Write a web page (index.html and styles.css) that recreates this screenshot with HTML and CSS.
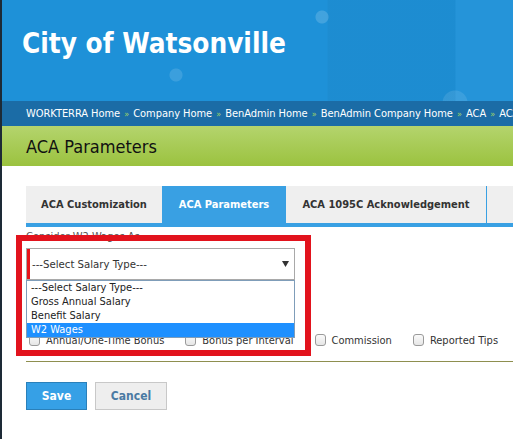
FILE: index.html
```html
<!DOCTYPE html>
<html lang="en">
<head>
<meta charset="utf-8">
<title>ACA Parameters</title>
<link rel="stylesheet" href="styles.css">
</head>
<body>
<div class="page">
  <header class="banner">
    <h1 class="brand">City of Watsonville</h1>
  </header>
  <nav class="crumbs">
    <span>WORKTERRA Home</span> <span class="sep">»</span>
    <span>Company Home</span> <span class="sep">»</span>
    <span>BenAdmin Home</span> <span class="sep">»</span>
    <span>BenAdmin Company Home</span> <span class="sep">»</span>
    <span>ACA</span> <span class="sep">»</span>
    <span>ACA Parameters</span>
  </nav>
  <div class="titlebar">
    <h2 class="title">ACA Parameters</h2>
  </div>
  <main class="content">
    <div class="tabs">
      <div class="tab tab-custom">ACA Customization</div>
      <div class="tab tab-params active">ACA Parameters</div>
      <div class="tab tab-ack">ACA 1095C Acknowledgement</div>
    </div>
    <section class="form">
      <div class="field-label">Consider W2 Wages As</div>
      <div class="select-wrap">
        <div class="select">
          <span class="select-text">---Select Salary Type---</span>
          <svg class="arrow" width="7" height="6" viewBox="0 0 7 6"><path d="M0 0H7L3.5 6Z" fill="#333"/></svg>
        </div>
        <ul class="options">
          <li>---Select Salary Type---</li>
          <li>Gross Annual Salary</li>
          <li>Benefit Salary</li>
          <li class="selected">W2 Wages</li>
        </ul>
      </div>
      <div class="checks">
        <label class="check"><span class="box"></span>Annual/One-Time Bonus</label>
        <label class="check"><span class="box"></span>Bonus per Interval</label>
        <label class="check"><span class="box"></span>Commission</label>
        <label class="check"><span class="box"></span>Reported Tips</label>
      </div>
      <div class="highlight"></div>
    </section>
    <div class="rule"></div>
    <div class="buttons">
      <button class="btn btn-save">Save</button>
      <button class="btn btn-cancel">Cancel</button>
    </div>
  </main>
</div>
</body>
</html>
```
FILE: styles.css
```css
html, body {
  margin: 0;
  padding: 0;
  background: #fff;
}
body {
  font-family: "DejaVu Sans", Verdana, sans-serif;
  color: #333;
  width: 513px;
  height: 439px;
  overflow: hidden;
}
.page {
  border-left: 2px solid #1d2a36;
  min-height: 439px;
  box-sizing: border-box;
}
.banner {
  height: 101px;
  box-sizing: border-box;
  padding: 28px 0 0 20px;
  background:
    radial-gradient(circle at 320px 17px, rgba(255,255,255,0.16) 0 6px, transparent 7px),
    radial-gradient(circle at 174px 75px, rgba(255,255,255,0.13) 0 6px, transparent 7px),
    radial-gradient(circle at 453px 103px, rgba(255,255,255,0.10) 0 12px, transparent 13px),
    linear-gradient(90deg, transparent 325px, rgba(0,0,0,0.03) 326px, rgba(0,0,0,0.03) 453px, rgba(255,255,255,0.03) 454px),
    #1e91d8;
}
.brand {
  margin: 0;
  font-family: "DejaVu Sans Condensed", "DejaVu Sans", sans-serif;
  font-weight: bold;
  font-size: 27.7px;
  line-height: 32px;
  color: #fff;
}
.crumbs {
  height: 25px;
  line-height: 25px;
  padding-left: 24px;
  background: #1b6ca6;
  color: #fff;
  font-family: "DejaVu Sans Condensed", "DejaVu Sans", sans-serif;
  font-size: 11px;
  letter-spacing: -0.05px;
  white-space: nowrap;
  overflow: hidden;
}
.crumbs .sep {
  color: #9fd36a;
  font-size: 9px;
  margin: 0 1px;
}
.titlebar {
  height: 40px;
  box-sizing: border-box;
  padding: 10px 0 0 24px;
  background: linear-gradient(#b4d46d, #9bc23f);
}
.title {
  margin: 0;
  font-family: "DejaVu Sans Condensed", "DejaVu Sans", sans-serif;
  font-weight: normal;
  font-size: 18px;
  line-height: 22px;
  color: #111;
}
.content {
  padding: 20px 0 0 24px;
}
.tabs {
  display: flex;
  height: 37px;
  background: #efefef;
  border-bottom: 4px solid #39a0e3;
}
.tab {
  box-sizing: border-box;
  height: 37px;
  line-height: 37px;
  text-align: center;
  font-family: "DejaVu Sans Condensed", "DejaVu Sans", sans-serif;
  font-weight: bold;
  font-size: 11px;
  color: #333;
}
.tab-custom { width: 136px; }
.tab-params { width: 124px; }
.tab-ack { width: 201px; border-right: 1px solid #39a0e3; }
.tab.active {
  background: #39a0e3;
  color: #fff;
}
.form {
  position: relative;
  font-family: "DejaVu Sans Condensed", "DejaVu Sans", sans-serif;
}
.field-label {
  margin-top: 2px;
  height: 15px;
  line-height: 15px;
  font-size: 11px;
  color: #555;
}
.select-wrap {
  position: relative;
  margin-top: 4px;
  width: 269px;
}
.select {
  height: 32px;
  box-sizing: border-box;
  border: 1px solid #a9a9a9;
  box-shadow: inset 3px 0 0 #e8141b;
  display: flex;
  align-items: center;
  justify-content: space-between;
  padding: 0 5px 0 5px;
  font-size: 11.3px;
  color: #333;
}
.arrow { display: block; }
.options {
  position: absolute;
  top: 100%;
  left: 0;
  right: 0;
  margin: 0;
  padding: 0;
  list-style: none;
  background: #fff;
  border: 1px solid #7f9db9;
  font-size: 11px;
  z-index: 2;
}
.options li {
  height: 14px;
  line-height: 14px;
  padding-left: 4px;
  color: #222;
}
.options li.selected {
  background: #1e90ff;
  color: #fff;
}
.checks {
  display: flex;
  gap: 21px;
  margin-top: 53px;
  padding-left: 3px;
  height: 14px;
  align-items: center;
  font-size: 11px;
  color: #333;
}
.check {
  display: flex;
  align-items: center;
  gap: 6px;
}
.box {
  width: 11px;
  height: 12px;
  box-sizing: border-box;
  border: 1px solid #9a9a9a;
  border-radius: 3px;
  background: linear-gradient(#fafafa, #e6e6e6);
}
.highlight {
  position: absolute;
  left: -10px;
  top: 6px;
  width: 295px;
  height: 121px;
  box-sizing: border-box;
  border: 6px solid #e2131d;
  z-index: 3;
  pointer-events: none;
}
.rule {
  margin-top: 14px;
  height: 1px;
  background: #8e8f4f;
}
.buttons {
  display: flex;
  gap: 8px;
  margin-top: 20px;
}
.btn {
  height: 28px;
  box-sizing: border-box;
  font-family: "DejaVu Sans Condensed", "DejaVu Sans", sans-serif;
  font-weight: bold;
  font-size: 12px;
  padding: 0;
  cursor: pointer;
}
.btn-save {
  width: 61px;
  background: #36a0e6;
  border: 1px solid #2a80ba;
  color: #fff;
}
.btn-cancel {
  width: 72px;
  background: #eeeeee;
  border: 1px solid #c8c8c8;
  color: #4a7aa3;
}
```
